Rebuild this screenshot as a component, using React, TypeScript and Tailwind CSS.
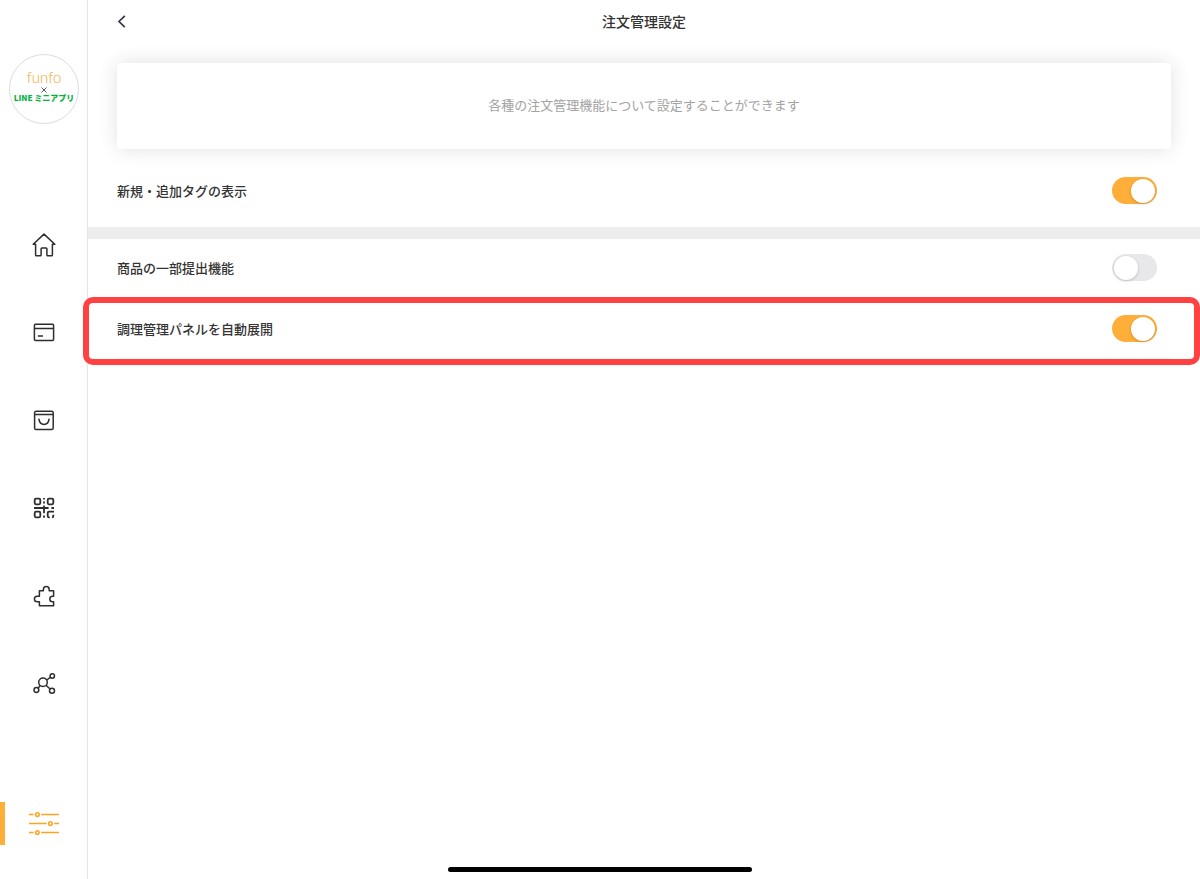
import type { ReactNode } from "react";

const navItems: { label: string; icon: ReactNode }[] = [
  {
    label: "ホーム",
    icon: (
      <path d="M3.6 12.2H1.2L12 2.1L22.8 12.2H20.4V23Q20.4 23.8 19.6 23.8H15.6Q14.9 23.8 14.9 23V16.7Q14.9 15.9 14.1 15.9H9.9Q9.1 15.9 9.1 16.7V23Q9.1 23.8 8.3 23.8H4.4Q3.6 23.8 3.6 23Z" />
    ),
  },
  {
    label: "会計",
    icon: (
      <>
        <rect x="2.4" y="4.2" width="19.2" height="16.2" rx="1.2" />
        <path d="M2.4 8.5H21.6M5.8 16H11" />
      </>
    ),
  },
  {
    label: "注文",
    icon: (
      <>
        <rect x="2.6" y="3.2" width="18.6" height="18.4" rx="1.6" />
        <path d="M2.6 6.6H21.2M7 11.2C7.4 14.6 9.4 16.4 12 16.4S16.6 14.6 17 11.2M6.2 11.4H7.8M16.2 11.4H17.8" />
      </>
    ),
  },
  {
    label: "QRコード",
    icon: (
      <g strokeWidth="1.8">
        <rect x="2.7" y="2.7" width="5.6" height="5.6" rx="1.2" />
        <rect x="15.7" y="2.7" width="5.6" height="5.6" rx="1.2" />
        <rect x="2.7" y="15.7" width="5.6" height="5.6" rx="1.2" />
        <path d="M2 12H16.6M19.4 12H22M12 2V3.6M12 5.6V7.6M12 9.4V17.2M12 19.6V21.8" />
        <path d="M22 15.7H17Q15.7 15.7 15.7 17V20Q15.7 21.3 17 21.3H17.8M21.3 18.8V20Q21.3 21.3 20 21.3" />
      </g>
    ),
  },
  {
    label: "拡張機能",
    icon: (
      <path d="M7.4 21.8V17.8H5.2A2.8 2.8 0 0 1 5.2 12.2H7.4V6.8H11.4V5.4A2.9 2.9 0 0 1 17.2 5.4V6.8H21.6V12.2H20.6A2.8 2.8 0 0 0 20.6 17.8H21.6V21.8Z" />
    ),
  },
  {
    label: "連携",
    icon: (
      <>
        <circle cx="11" cy="10.2" r="4.3" />
        <circle cx="20.3" cy="4" r="2.2" />
        <circle cx="20" cy="18.8" r="2.5" />
        <circle cx="4.4" cy="18" r="2.4" />
        <path d="M14.7 8L18.4 5.3M14 13.3L18.1 17M8.2 13.6L6 16.2" />
      </>
    ),
  },
];

function Sidebar() {
  return (
    <aside className="flex w-[88px] shrink-0 flex-col pt-[54px] pb-[34px] shadow-[inset_-1px_0_#e6e6e6]">
      <div className="mx-auto flex h-[70px] w-[70px] flex-col items-center rounded-full border border-[#dcdcdc] pt-3">
        <span className="font-[family-name:Lato,sans-serif] text-[15px] leading-[20px] font-light text-[#f8a52c]">
          funfo
        </span>
        <svg width="6" height="6" viewBox="0 0 6 6" stroke="#444" aria-hidden="true">
          <path d="M0.5 0.5L5.5 5.5M5.5 0.5L0.5 5.5" strokeWidth="0.9" />
        </svg>
        <span className="text-[8px] leading-[10px] font-black whitespace-nowrap text-[#06b13c]">
          LINE ミニアプリ
        </span>
      </div>
      <nav className="mt-[76px] flex grow flex-col">
        {navItems.map((item) => (
          <a key={item.label} href="#" aria-label={item.label} className="flex h-[88px] items-center justify-center">
            <svg
              width="24"
              height="24"
              viewBox="0 0 24 24"
              fill="none"
              stroke="#2e2e2e"
              strokeWidth="1.5"
              strokeLinejoin="round"
              className="overflow-visible"
              aria-hidden="true"
            >
              {item.icon}
            </svg>
          </a>
        ))}
        <a
          href="#"
          aria-label="設定"
          aria-current="page"
          className="mt-auto flex h-[43px] items-center justify-center border-l-[5px] border-[#ffae3a] pr-[5px]"
        >
          <svg width="30" height="24" viewBox="0 0 30 24" fill="none" stroke="#ffa31f" strokeWidth="1.5" aria-hidden="true">
            <path d="M0 2.6H4.6M12.2 2.6H30M0 11.6H17.6M25.2 11.6H30M0 20.6H4.6M12.2 20.6H30" />
            <circle cx="8.4" cy="2.6" r="1.8" />
            <circle cx="21.4" cy="11.6" r="1.8" />
            <circle cx="8.4" cy="20.6" r="1.8" />
          </svg>
        </a>
      </nav>
    </aside>
  );
}

function SettingRow({ id, label, on = false }: { id: string; label: string; on?: boolean }) {
  return (
    <div className="flex grow items-center justify-between pr-[14px]">
      <label htmlFor={id} className="text-[13px] leading-5 font-medium">
        {label}
      </label>
      <input
        id={id}
        type="checkbox"
        role="switch"
        defaultChecked={on}
        className="relative h-[27px] w-[45px] shrink-0 cursor-pointer appearance-none rounded-full bg-[#e8e8ea] before:absolute before:top-[2px] before:left-[2px] before:h-6 before:w-6 before:rounded-full before:bg-white before:shadow-[0_1px_3px_rgba(0,0,0,0.2)] checked:bg-[#ffae3a] checked:before:left-[19px]"
      />
    </div>
  );
}

export default function App() {
  return (
    <div className="flex min-h-screen bg-white font-['Noto_Sans_CJK_JP',sans-serif] text-[#333]">
      <Sidebar />
      <main className="min-w-0 grow">
        <header className="grid h-[42px] grid-cols-[1fr_auto_1fr] items-center px-[29px]">
          <button type="button" aria-label="戻る" className="flex h-6 w-6 items-center">
            <svg width="10" height="14" viewBox="0 0 10 14" fill="none" stroke="#35354a" strokeWidth="1.7" aria-hidden="true">
              <path d="M7.8 1.8L2 7.5L7.8 13.2" />
            </svg>
          </button>
          <h1 className="text-[14px] leading-5 font-medium">注文管理設定</h1>
        </header>
        <p className="mx-[29px] mt-[21px] flex h-[86px] items-center justify-center rounded-[4px] bg-white pb-[2px] text-[13px] leading-5 text-[#a3a3a3] shadow-[0_0_20px_rgba(0,0,0,0.12)]">
          各種の注文管理機能について設定することができます
        </p>
        <section className="mt-[6px] flex h-[72px] px-[29px] pb-px">
          <SettingRow id="tag" label="新規・追加タグの表示" on />
        </section>
        <div className="h-3 bg-[#ededed]" />
        <section className="flex h-[58px] px-[29px] pb-px">
          <SettingRow id="partial" label="商品の一部提出機能" />
        </section>
        <section className="relative px-[29px]">
          <div className="flex h-[62px] border-b border-[#f3f3f3] pt-[2px]">
            <SettingRow id="panel" label="調理管理パネルを自動展開" on />
          </div>
          <div className="pointer-events-none absolute top-0 right-0 -bottom-[6px] -left-[5px] rounded-[10px] border-[6px] border-[#ff4141]" />
        </section>
      </main>
      <div className="fixed bottom-[7px] left-1/2 h-[5px] w-[304px] -translate-x-1/2 rounded-full bg-black" />
    </div>
  );
}
